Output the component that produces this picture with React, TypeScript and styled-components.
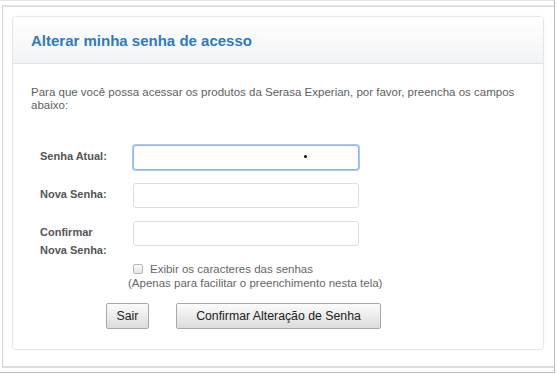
import React from "react";
import styled, { createGlobalStyle } from "styled-components";

const Global = createGlobalStyle`
  html, body { margin: 0; padding: 0; background: #fff; }
  body { font-family: "Liberation Sans", Arial, sans-serif; }
  * { box-sizing: border-box; }
`;

const Page = styled.div`
  width: 555px;
  height: 373px;
  border-top: 1px solid #e6e6e6;
  border-right: 1px solid #bdbdbd;
  border-bottom: 1px solid #bdbdbd;
  padding: 4px 0 4px 2px;
  display: flex;
  flex-direction: column;
`;

const Frame = styled.div`
  flex: 1;
  border-top: 2px solid #e2e2e2;
  border-left: 1px solid #d2d2d2;
  border-bottom: 2px solid #dcdcdc;
  padding: 9px 10px 16px 9px;
  display: flex;
  flex-direction: column;
`;

const Card = styled.div`
  flex: 1;
  border: 1px solid #e6e6e6;
  border-radius: 4px;
  box-shadow: 0 0 2px rgba(0, 0, 0, 0.05);
  display: flex;
  flex-direction: column;
  overflow: hidden;
`;

const Header = styled.div`
  height: 47px;
  display: flex;
  align-items: center;
  padding-left: 18px;
  background: linear-gradient(#ffffff, #f2f3f4);
  border-bottom: 1px solid #e1e1e1;
`;

const Title = styled.h1`
  margin: 0;
  font-size: 15px;
  font-weight: bold;
  color: #2c7bc2;
`;

const Body = styled.div`
  padding: 22px 18px 0 18px;
`;

const Intro = styled.p`
  margin: 0;
  font-size: 11.5px;
  line-height: 13px;
  color: #5e5e5e;
`;

const Form = styled.div`
  margin-top: 33px;
  margin-left: 9px;
  display: grid;
  grid-template-columns: 93px 226px;
  row-gap: 13px;
  align-items: start;
`;

const Label = styled.label`
  font-size: 11px;
  font-weight: bold;
  line-height: 18px;
  color: #555;
  padding-top: 2px;
`;

const InputWrap = styled.div`
  position: relative;
`;

const Input = styled.input<{ $focused?: boolean }>`
  display: block;
  width: 226px;
  height: 25px;
  border: 1px solid ${(p) => (p.$focused ? "#8fb6f1" : "#dedede")};
  box-shadow: ${(p) => (p.$focused ? "0 0 0 1px #a9c7f5" : "none")};
  border-radius: 3px;
  outline: none;
  background: #fff;
`;

const Dot = styled.span`
  position: absolute;
  left: 171px;
  top: 10px;
  width: 3px;
  height: 3px;
  border-radius: 50%;
  background: #111;
`;

const Options = styled.div`
  margin-top: 3px;
  font-size: 11.5px;
  line-height: 14px;
  color: #666;
`;

const CheckLine = styled.label`
  display: flex;
  align-items: center;
  gap: 7px;
  padding-left: 102px;
`;

const Check = styled.input`
  appearance: none;
  margin: 0;
  width: 10px;
  height: 10px;
  border: 1px solid #b8b8b8;
  border-radius: 2px;
  background: linear-gradient(#fdfdfd, #e4e4e4);
`;

const Note = styled.div`
  padding-left: 97px;
`;

const Buttons = styled.div`
  margin-top: 13px;
  margin-left: 75px;
  display: flex;
  gap: 27px;
`;

const Button = styled.button<{ $w: number }>`
  width: ${(p) => p.$w}px;
  height: 26px;
  padding: 0;
  font-family: "Liberation Sans", Arial, sans-serif;
  font-size: 12.3px;
  color: #222;
  border: 1px solid #a9a9a9;
  border-radius: 2px;
  background: linear-gradient(#fbfbfb, #dcdcdc);
`;

export default function App() {
  return (
    <>
      <Global />
      <Page>
        <Frame>
          <Card>
            <Header>
              <Title>Alterar minha senha de acesso</Title>
            </Header>
            <Body>
              <Intro>
                Para que você possa acessar os produtos da Serasa Experian, por favor, preencha os campos
                abaixo:
              </Intro>
              <Form>
                <Label>Senha Atual:</Label>
                <InputWrap>
                  <Input type="password" $focused />
                  <Dot />
                </InputWrap>
                <Label>Nova Senha:</Label>
                <InputWrap>
                  <Input type="password" />
                </InputWrap>
                <Label>
                  Confirmar
                  <br />
                  Nova Senha:
                </Label>
                <InputWrap>
                  <Input type="password" />
                </InputWrap>
              </Form>
              <Options>
                <CheckLine>
                  <Check type="checkbox" />
                  Exibir os caracteres das senhas
                </CheckLine>
                <Note>(Apenas para facilitar o preenchimento nesta tela)</Note>
              </Options>
              <Buttons>
                <Button $w={43}>Sair</Button>
                <Button $w={205}>Confirmar Alteração de Senha</Button>
              </Buttons>
            </Body>
          </Card>
        </Frame>
      </Page>
    </>
  );
}
